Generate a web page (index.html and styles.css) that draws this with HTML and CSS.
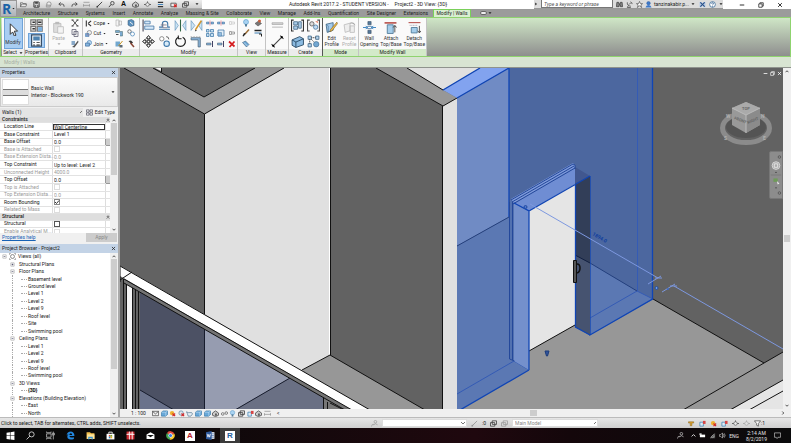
FILE: index.html
```html
<!DOCTYPE html>
<html lang="en">
<head>
<meta charset="utf-8">
<title>Autodesk Revit 2017.2</title>
<link rel="stylesheet" href="styles.css">
</head>
<body>
<svg class="sprite" aria-hidden="true">
  <defs>
  <symbol id="open" viewBox="0 0 16 16"><path d="M1 13V4h5l1 2h6v2M1 13l3-6h12l-3 6z" fill="#e8e8e8" stroke="#555" stroke-width="1.5"/></symbol>
  <symbol id="save" viewBox="0 0 16 16"><path d="M2 2h11l1 1v11H2z" fill="#ccc" stroke="#333" stroke-width="2"/><path d="M5 2h6v4H5zM4 9h8v5H4z" fill="#444"/><path d="M6 10h4v3H6z" fill="#fff"/></symbol>
  <symbol id="sync" viewBox="0 0 16 16"><circle cx="9" cy="7" r="5" fill="#eee" stroke="#777" stroke-width="1.5"/><path d="M3 9h9v5H3z" fill="#bbb" stroke="#777"/></symbol>
  <symbol id="undo" viewBox="0 0 16 16"><path d="M6 3L2 7l4 4M2 7h8q4 0 4 6" fill="none" stroke="#444" stroke-width="2"/></symbol>
  <symbol id="redo" viewBox="0 0 16 16"><path d="M10 3l4 4-4 4M14 7H6q-4 0-4 6" fill="none" stroke="#444" stroke-width="2"/></symbol>
  <symbol id="dim" viewBox="0 0 16 16"><path d="M1 3h14M1 10h14M1 7v6M15 7v6" stroke="#888" stroke-width="1.5"/></symbol>
  <symbol id="line" viewBox="0 0 16 16"><path d="M2 14L14 2" stroke="#333" stroke-width="2"/><circle cx="3" cy="13" r="2" fill="#333"/></symbol>
  <symbol id="tag" viewBox="0 0 16 16"><path d="M2 14L8 7" stroke="#333" stroke-width="2"/><circle cx="10" cy="5" r="4" fill="#ddd" stroke="#444" stroke-width="2"/></symbol>
  <symbol id="house" viewBox="0 0 16 16"><path d="M1 7l7-5 7 5v5l-7 3-7-3z" fill="#ccc" stroke="#555" stroke-width="2"/><path d="M7 8h4v5H7z" fill="#555"/></symbol>
  <symbol id="section" viewBox="0 0 16 16"><circle cx="8" cy="8" r="4" fill="#eee" stroke="#555" stroke-width="1.5"/><path d="M0 8h4m8 0h4M8 1v3" stroke="#555" stroke-width="2"/></symbol>
  <symbol id="thin" viewBox="0 0 16 16"><path d="M2 3h12M2 13h12" stroke="#333" stroke-width="3"/><path d="M2 8h12" stroke="#2e79ba" stroke-width="2"/></symbol>
  <symbol id="close-win" viewBox="0 0 16 16"><path d="M2 5h12v8H2z" fill="#eee" stroke="#555" stroke-width="2"/><path d="M9 8l6 6m0-6l-6 6" stroke="#d22" stroke-width="2.5"/></symbol>
  <symbol id="switch" viewBox="0 0 16 16"><path d="M5 2h10v8H5zM1 6h10v8H1z" fill="#eee" stroke="#444" stroke-width="2"/></symbol>
  <symbol id="pointer" viewBox="0 0 16 16"><path d="M4 1l9 9H9l2 5-2 1-2-5-3 3z" fill="#fff" stroke="#333" stroke-width="1.2"/></symbol>
  <symbol id="types" viewBox="0 0 16 16"><path d="M1 1h6v6H1zM9 1h6v6H9zM1 9h6v6H1zM9 9h6v6H9z" fill="#eee" stroke="#777" stroke-width="1.5"/><path d="M3 4h3M10 4h4M3 12h3" stroke="#333" stroke-width="2"/><path d="M10 10h5v5h-5z" fill="#79aede"/></symbol>
  <symbol id="props" viewBox="0 0 16 16"><path d="M2 1h12v14H2z" fill="#fff" stroke="#344c66" stroke-width="1.5"/><path d="M4 3h8v5H4z" fill="#4e82af"/><path d="M4 10h2v1H4zm4 0h4v1H8zm-4 3h2v1H4zm4 0h4v1H8z" fill="#222"/></symbol>
  <symbol id="paste" viewBox="0 0 16 16"><path d="M2 3h9v11H2z" fill="#ddd" stroke="#bbb"/><path d="M4 1h5v3H4z" fill="#bbb"/><path d="M7 7h7v8H7z" fill="#f4f4f4" stroke="#bbb"/></symbol>
  <symbol id="cutx" viewBox="0 0 16 16"><path d="M3 2l10 12M13 2L3 14" stroke="#555" stroke-width="2"/><path d="M1 2h4m6 0h4M1 14h4m6 0h4" stroke="#333" stroke-width="2"/></symbol>
  <symbol id="copy" viewBox="0 0 16 16"><path d="M2 1h8v10H2zM6 5h8v10H6z" fill="#f3f3f3" stroke="#667" stroke-width="1.6"/></symbol>
  <symbol id="brush" viewBox="0 0 16 16"><path d="M1 2h7v8H1z" fill="#89a9c8"/><path d="M14 1L6 11l-4 3 5 1 8-11z" fill="#555"/></symbol>
  <symbol id="cope" viewBox="0 0 16 16"><path d="M3 1v14M7 8l7-6M7 8l7 6" fill="none" stroke="#333" stroke-width="2.5"/></symbol>
  <symbol id="cut" viewBox="0 0 16 16"><circle cx="10" cy="6" r="5" fill="#eee" stroke="#777" stroke-width="1.5"/><path d="M1 8h8v7H1z" fill="#6fa5d6" stroke="#36679a"/><path d="M4 9l4 4" stroke="#e44"/></symbol>
  <symbol id="join" viewBox="0 0 16 16"><circle cx="10" cy="6" r="5" fill="#bcd8ef" stroke="#4580b5" stroke-width="1.5"/><path d="M1 7h9v7H1z" fill="#89b7df" stroke="#36679a" stroke-width="1.5"/></symbol>
  <symbol id="split" viewBox="0 0 16 16"><path d="M2 2h6v12H2zM8 4h5v8H8z" fill="#f5f5f5" stroke="#999"/></symbol>
  <symbol id="paint" viewBox="0 0 16 16"><path d="M2 3l7-2 5 3v9l-7 2-5-3z" fill="#5b91be" stroke="#35536d"/><path d="M6 6l6 5" stroke="#eee" stroke-width="2"/></symbol>
  <symbol id="beam" viewBox="0 0 16 16"><path d="M1 3h8v4H1zM10 5h5v9h-5" fill="#7aa9d0" stroke="#466"/><path d="M2 10h5v2H2z" fill="#444"/></symbol>
  <symbol id="circles" viewBox="0 0 16 16"><circle cx="5" cy="5" r="3.5" fill="none" stroke="#555" stroke-width="1.5"/><circle cx="11" cy="10" r="4" fill="#fff" stroke="#4b87b9" stroke-width="1.5"/></symbol>
  <symbol id="facesplit" viewBox="0 0 16 16"><path d="M1 3h9v10H1z" fill="#73a8cf"/><path d="M15 2L7 12" stroke="#c59426" stroke-width="2"/><path d="M9 10h6v5H9z" fill="#5d6b75"/></symbol>
  <symbol id="hammer" viewBox="0 0 16 16"><path d="M3 2l5-1 4 4-3 3z" fill="#333"/><path d="M7 6l7 8" stroke="#843" stroke-width="3"/></symbol>
  <symbol id="align" viewBox="0 0 24 24"><path d="M2 1v22" stroke="#445" stroke-width="2"/><path d="M5 4h10v5H5zM5 13h17v6H5z" fill="#d7eafa" stroke="#4778a5" stroke-width="1.5"/></symbol>
  <symbol id="offset" viewBox="0 0 24 24"><path d="M2 19h20M2 15h6V9q0-5 5-5t5 5v6h4" fill="none" stroke="#3e76a8" stroke-width="2"/><path d="M5 11h11M9 8v8h8" fill="none" stroke="#778" stroke-width="1.5"/></symbol>
  <symbol id="mirror" viewBox="0 0 24 24"><path d="M2 3l6 9-6 9zM22 3l-6 9 6 9z" fill="#cce4f5" stroke="#477fac"/><path d="M12 1v22" stroke="#364" stroke-width="2"/></symbol>
  <symbol id="mirror2" viewBox="0 0 24 24"><path d="M2 3l7 9-7 9zM22 3l-6 9 6 9z" fill="#cce4f5" stroke="#477fac"/><path d="M21 3L10 20" stroke="#d5972c" stroke-width="3"/><path d="M10 20l-1 3 4-2" fill="#333"/></symbol>
  <symbol id="move" viewBox="0 0 24 24"><path d="M12 1l4 5h-3v5h5V8l5 4-5 4v-3h-5v5h3l-4 5-4-5h3v-5H6v3l-5-4 5-4v3h5V6H8z" fill="#fff" stroke="#222" stroke-width="1.8"/></symbol>
  <symbol id="copy2" viewBox="0 0 24 24"><circle cx="7" cy="7" r="4" fill="#fff" stroke="#777" stroke-width="1.5"/><circle cx="16" cy="16" r="5" fill="#d9ebf8" stroke="#3e78aa" stroke-width="2"/><path d="M15 3q5 0 5 5" fill="none" stroke="#444" stroke-width="1.5"/></symbol>
  <symbol id="rotate" viewBox="0 0 24 24"><path d="M8 4A9 9 0 1 0 16 4" fill="none" stroke="#222" stroke-width="2.2"/><path d="M8 1v6h6" fill="none" stroke="#222" stroke-width="2"/></symbol>
  <symbol id="trim" viewBox="0 0 24 24"><path d="M2 5h17v17h-4V9H2z" fill="#8db8dd" stroke="#4d6479" stroke-width="1.4"/><path d="M1 3h20" stroke="#999" stroke-dasharray="3 2"/></symbol>
  <symbol id="splitel" viewBox="0 0 16 16"><path d="M1 6h5v4H1zM10 6h5v4h-5z" fill="#85b2d9" stroke="#396b98"/><path d="M8 3v10" stroke="#c34"/></symbol>
  <symbol id="array" viewBox="0 0 16 16"><path d="M1 1h5v5H1zM9 1h6v5H9zM1 9h5v6H1zM9 9h6v6H9z" fill="#c6dff2" stroke="#3f78a8" stroke-width="1.5"/></symbol>
  <symbol id="scale" viewBox="0 0 16 16"><path d="M2 2h12v12H2z" fill="#e1eef8" stroke="#4077a5" stroke-width="1.5"/><path d="M2 7h7v7H2z" fill="#92bcdf" stroke="#4077a5"/></symbol>
  <symbol id="extend" viewBox="0 0 16 16"><path d="M1 6h9v4H1z" fill="#85b2d9" stroke="#456"/><path d="M13 2v12" stroke="#446" stroke-width="2"/></symbol>
  <symbol id="pin" viewBox="0 0 16 16"><path d="M3 5h4v6H3zM8 6h5v4H8" fill="#eee" stroke="#888" stroke-width="1.5"/></symbol>
  <symbol id="delete" viewBox="0 0 16 16"><path d="M2 3l11 10M13 3L3 14" stroke="#d51d20" stroke-width="3.5"/></symbol>
  <symbol id="bulb" viewBox="0 0 16 16"><circle cx="8" cy="6" r="5" fill="#a9d3f2" stroke="#438dc1"/><path d="M6 10h4v5H6z" fill="#577f9c"/></symbol>
  <symbol id="override" viewBox="0 0 16 16"><path d="M2 9l7-5 6 5-7 5z" fill="#777" stroke="#444"/><circle cx="11" cy="4" r="3" fill="#c95e3b"/></symbol>
  <symbol id="paintbrush" viewBox="0 0 16 16"><path d="M14 1L6 10" stroke="#9a6b32" stroke-width="3"/><path d="M8 9l-5 6-2-1 3-6z" fill="#222"/></symbol>
  <symbol id="linework" viewBox="0 0 16 16"><path d="M1 3h14" stroke="#222" stroke-width="3"/><path d="M1 8h14" stroke="#3b7cb2" stroke-width="2"/><path d="M10 10h5v5" fill="none" stroke="#222" stroke-width="2"/></symbol>
  <symbol id="hidebox" viewBox="0 0 16 16"><path d="M1 5l6-3 7 7-5 5z" fill="#6ba6d5" stroke="#31536e"/><path d="M4 5l7 7" stroke="#fff"/></symbol>
  <symbol id="ruler" viewBox="0 0 24 16"><path d="M2 3h20v3H2zM2 11h20" fill="#ddd" stroke="#aaa" stroke-width="1.5"/></symbol>
  <symbol id="measure" viewBox="0 0 24 24"><path d="M4 20L20 4M1 17l6 6M17 1l6 6" stroke="#444" stroke-width="2"/><circle cx="4" cy="20" r="2"/><circle cx="20" cy="4" r="2"/></symbol>
  <symbol id="group" viewBox="0 0 24 24"><path d="M5 2H1v20h4M19 2h4v20h-4" fill="none" stroke="#333" stroke-width="2"/><path d="M5 5h7v6H5zM14 5h5v12h-5zM5 13h7v6H5z" fill="#a9cce9" stroke="#4a6c89" stroke-width="1.5"/></symbol>
  <symbol id="similar" viewBox="0 0 24 24"><path d="M5 2H1v20h4M19 2h4v20h-4" fill="none" stroke="#555" stroke-width="2"/><circle cx="9" cy="9" r="4" fill="#ddd" stroke="#555" stroke-width="1.5"/><circle cx="16" cy="15" r="4" fill="#c4dcf0" stroke="#487aa5" stroke-width="1.5"/><path d="M15 4h5v4" fill="#e9795d"/></symbol>
  <symbol id="parts" viewBox="0 0 24 24"><path d="M2 9l14-6 7 4v11L9 23l-7-4z" fill="#8bbae0" stroke="#24445f" stroke-width="1.6"/><path d="M2 9l7 4v10m0-10l14-6" fill="none" stroke="#24445f" stroke-width="1.6"/></symbol>
  <symbol id="assembly" viewBox="0 0 24 24"><path d="M2 2h6v6H2zM16 2h6v6h-6zM2 16h6v6H2z" fill="#b9d8ef" stroke="#476c8b" stroke-width="1.6"/><circle cx="17" cy="17" r="5" fill="#73a7d2" stroke="#325f83"/><path d="M8 5h8M5 8v8M8 8l5 5" stroke="#333" stroke-width="1.5" stroke-dasharray="2 1"/></symbol>
  <symbol id="editp" viewBox="0 0 24 24"><path d="M2 6l13-3v14L4 21z" fill="#a3caec" stroke="#3d6584" stroke-width="1.5"/><path d="M2 6l4 3v12" fill="none" stroke="#3d6584"/><path d="M22 2L10 16l-1 4 4-2L23 5z" fill="#efba46" stroke="#735921"/></symbol>
  <symbol id="resetp" viewBox="0 0 24 24"><path d="M2 7l11-3v14L4 21zM13 9h8v12h-8z" fill="#eee" stroke="#bbb" stroke-width="1.5"/><path d="M13 4q7-2 9 4" fill="none" stroke="#aaa" stroke-width="2"/></symbol>
  <symbol id="opening" viewBox="0 0 24 24"><path d="M9 1h6v6H9zM9 17h6v6H9z" fill="#54799b" stroke="#34475b"/><path d="M8 10h8v4H8z" fill="#fff" stroke="#4e7fac" stroke-width="1.5"/><path d="M0 12h7m10 0h7M5 9l3 3-3 3M19 9l-3 3 3 3" fill="none" stroke="#357fbe" stroke-width="1.7"/></symbol>
  <symbol id="attach" viewBox="0 0 24 24"><path d="M1 2h22v3H1z" fill="#b7524c"/><path d="M6 7h11v16H6z" fill="#a5cdea" stroke="#487493" stroke-width="1.5"/><path d="M20 21V9m-3 3l3-4 3 4" fill="none" stroke="#333" stroke-width="1.5"/></symbol>
  <symbol id="detach" viewBox="0 0 24 24"><path d="M1 2h22v2H1z" fill="#b7524c"/><path d="M6 12h11v10H6z" fill="#a5cdea" stroke="#487493" stroke-width="1.5"/><path d="M3 8h15" stroke="#778" stroke-dasharray="2 1"/><path d="M21 9v12m-3-3l3 4 3-4" fill="none" stroke="#333" stroke-width="1.5"/></symbol>
  <symbol id="binoc" viewBox="0 0 16 16"><path d="M2 3h4l1 4h2l1-4h4l1 10h-5V9H7v4H1z" fill="#888" stroke="#333" stroke-width="1.5"/></symbol>
  <symbol id="dish" viewBox="0 0 16 16"><path d="M3 3q-1 8 8 9M5 11l-2 4h8M10 2q4 1 4 5M7 8l4-4" fill="none" stroke="#555" stroke-width="2"/></symbol>
  <symbol id="star" viewBox="0 0 16 16"><path d="M8 1l2 5h5l-4 3 2 6-5-4-5 4 2-6-4-3h5z" fill="#fff" stroke="#444" stroke-width="1.4"/></symbol>
  <symbol id="user" viewBox="0 0 16 16"><circle cx="8" cy="5" r="4" fill="#3e79ca" stroke="#25549d"/><path d="M1 15q1-6 7-6t7 6z" fill="#3e79ca"/></symbol>
  <symbol id="exchange" viewBox="0 0 16 16"><path d="M1 2h6v12H1zM9 2h6v12H9z" fill="#b9cbe4"/><path d="M3 3l10 10M13 3L3 13" stroke="#274f87" stroke-width="2.5"/></symbol>
  <symbol id="help" viewBox="0 0 16 16"><circle cx="8" cy="8" r="6.5" fill="#fff" stroke="#376895" stroke-width="1.8"/><path d="M6 6q0-2 2-2t2 2-2 3m0 2v2" fill="none" stroke="#245386" stroke-width="1.8"/></symbol>
  <symbol id="min" viewBox="0 0 16 16"><path d="M2 8h12" stroke="currentColor" stroke-width="2.5"/></symbol>
  <symbol id="restore" viewBox="0 0 16 16"><path d="M2 5h9v9H2zM5 5V2h9v9h-3" fill="none" stroke="currentColor" stroke-width="2"/></symbol>
  <symbol id="x" viewBox="0 0 16 16"><path d="M3 3l10 10M13 3L3 13" stroke="currentColor" stroke-width="2.4"/></symbol>
  <symbol id="down" viewBox="0 0 16 16"><path d="M2 5l6 6 6-6" fill="none" stroke="currentColor" stroke-width="3"/></symbol>
  <symbol id="up" viewBox="0 0 16 16"><path d="M2 11l6-6 6 6" fill="none" stroke="currentColor" stroke-width="3"/></symbol>
  <symbol id="fold" viewBox="0 0 16 16"><path d="M3 8l5-5 5 5M3 14l5-5 5 5" fill="none" stroke="#222" stroke-width="2.5"/></symbol>
  <symbol id="tri" viewBox="0 0 16 16"><path d="M2 5h12l-6 7z" fill="currentColor"/></symbol>
  <symbol id="edittype" viewBox="0 0 16 16"><path d="M1 2h6v5H1zM9 2h6v5H9zM1 9h6v5H1zM9 9h6v5H9z" fill="#fff" stroke="#445" stroke-width="1.5"/></symbol>
  <symbol id="minus" viewBox="0 0 9 9"><path d="M1.5 1.5h6v6h-6z" fill="#fff" stroke="#999"/><path d="M3 4.5h3" stroke="#335"/></symbol>
  <symbol id="plus" viewBox="0 0 9 9"><path d="M1.5 1.5h6v6h-6z" fill="#fff" stroke="#999"/><path d="M3 4.5h3M4.500 3v3" stroke="#335"/></symbol>
  <symbol id="views" viewBox="0 0 16 16"><circle cx="8" cy="8" r="4.500" fill="none" stroke="#555" stroke-width="1.5"/><path d="M4 1H1v3M12 1h3v3M4 15H1v-3M12 15h3v-3" fill="none" stroke="#777" stroke-width="1.5"/></symbol>
  <symbol id="detail" viewBox="0 0 16 16"><path d="M1 3h14v10H1zM1 3l7 6 7-6" fill="#eee" stroke="#444" stroke-width="1.6"/></symbol>
  <symbol id="cube" viewBox="0 0 16 16"><path d="M1 5l4-3h10v8l-4 4H1z" fill="#69a9d9" stroke="#286c9b" stroke-width="1.3"/><path d="M1 5h10v9m0-9l4-3" fill="none" stroke="#eaf6ff"/></symbol>
  <symbol id="sun" viewBox="0 0 16 16"><circle cx="7" cy="7" r="5" fill="#efb22f"/><path d="M8 8l6 6m0-6l-6 6" stroke="#d02626" stroke-width="2.5"/></symbol>
  <symbol id="shadow" viewBox="0 0 16 16"><circle cx="7" cy="7" r="5" fill="#dce5ed" stroke="#5580a0" stroke-width="1.5"/><path d="M8 8l6 6m0-6l-6 6" stroke="#d02626" stroke-width="2.5"/></symbol>
  <symbol id="teapot" viewBox="0 0 16 16"><path d="M1 4l4 2h8l2 3-4 5H5L3 8z" fill="#e7eff5" stroke="#49728f" stroke-width="1.5"/></symbol>
  <symbol id="glasses" viewBox="0 0 16 16"><circle cx="4" cy="9" r="3" fill="none" stroke="#555" stroke-width="1.6"/><circle cx="12" cy="7" r="3" fill="none" stroke="#555" stroke-width="1.6"/></symbol>
  <symbol id="filter" viewBox="0 0 16 16"><path d="M1 2h14l-5 6v6l-4-2V8z" fill="#fff" stroke="#444" stroke-width="1.6"/></symbol>
  <symbol id="link" viewBox="0 0 16 16"><path d="M1 4h12v3H9v6H5V7H1z" fill="#dca02b" stroke="#80611d"/></symbol>
  <symbol id="selpin" viewBox="0 0 16 16"><path d="M2 5h8v9H2z" fill="#dceaf5" stroke="#377db0" stroke-width="1.6"/><path d="M9 2h6v7H9z" fill="#d74444"/></symbol>
  <symbol id="win" viewBox="0 0 16 16"><path d="M1 3l6-1v6H1zm7-1l7-1v7H8zM1 9h6v6l-6-1zm7 0h7v7l-7-1z" fill="#fff"/></symbol>
  <symbol id="search" viewBox="0 0 16 16"><circle cx="10" cy="6" r="4.500" fill="none" stroke="#ddd" stroke-width="1.500"/><path d="M7 9l-6 6" stroke="#ddd" stroke-width="1.500"/></symbol>
  <symbol id="task" viewBox="0 0 16 16"><path d="M1 5h8v6H1zM1 1v2h8V1M1 15v-2h8v2M13 1v14M11 4h4v3h-4z" fill="none" stroke="#bbb" stroke-width="1.4"/></symbol>
  <symbol id="edge" viewBox="0 0 16 16"><path d="M1 8Q2 1 9 1q6 1 6 8H6q1 4 8 2v3q-7 3-11-1-2-5 2-8-3 1-4 3M6 7h5q0-3-2.500-3T6 7" fill="#2388e0"/></symbol>
  <symbol id="folder" viewBox="0 0 16 16"><path d="M1 2h6l2 2h6v10H1z" fill="#f4c04d"/><path d="M2 6h13v8H2z" fill="#ffe59b"/><path d="M4 10h8v5h-2v-2H6v2H4z" fill="#3c96d5"/></symbol>
  <symbol id="store" viewBox="0 0 16 16"><path d="M1 5h14v10H1z" fill="#fff"/><path d="M5 5V2h6v3" fill="none" stroke="#fff" stroke-width="1.500"/><path d="M5 7h3v3H5z" fill="#e44a28"/><path d="M8 7h3v3H8z" fill="#6ca72d"/><path d="M5 10h3v3H5z" fill="#2584c7"/><path d="M8 10h3v3H8z" fill="#f3b21f"/></symbol>
  <symbol id="gift" viewBox="0 0 16 16"><path d="M1 1h14v14H1z" fill="#cc2a30"/><path d="M6 1v14M11 1v14M1 6h14" stroke="#fff" stroke-width="1.600"/><path d="M3 4h10" stroke="#f5c7c9"/></symbol>
  <symbol id="mail" viewBox="0 0 16 16"><path d="M1 6l7-4 7 4v8H1z" fill="#fff"/><path d="M2 7l6 4 6-4H2" fill="#111"/></symbol>
  <symbol id="chrome" viewBox="0 0 16 16"><path d="M8 8L1.500 4A7.500 7.500 0 0 1 15 5z" fill="#e34a3c"/><path d="M8 8L1.500 4A7.500 7.500 0 0 0 7 15.500z" fill="#44a853"/><path d="M8 8L7 15.500A7.500 7.500 0 0 0 15 5z" fill="#f9c82d"/><circle cx="8" cy="8" r="3.800" fill="#fff"/><circle cx="8" cy="8" r="2.800" fill="#397be8"/></symbol>
  <symbol id="wordic" viewBox="0 0 16 16"><path d="M8 2h7v12H8z" fill="#e7eef9"/><path d="M9 5h5M9 8h5M9 11h5" stroke="#2b579a"/><path d="M0 2l10-2v16L0 14z" fill="#2b579a"/><path d="M2 5l1.500 6L5 6l1.500 5L8 5" fill="none" stroke="#fff" stroke-width="1.300"/></symbol>
  <symbol id="people" viewBox="0 0 16 16"><circle cx="10" cy="4" r="3" fill="none" stroke="currentColor" stroke-width="1.400"/><path d="M6 11q4-5 9 0M1 15q1-7 6-5" fill="none" stroke="currentColor" stroke-width="1.400"/></symbol>
  <symbol id="battery" viewBox="0 0 16 16"><path d="M2 6h12v6H2z" fill="#fff"/><path d="M1 3h5v4H1z" fill="#ddd"/></symbol>
  <symbol id="wifi" viewBox="0 0 16 16"><path d="M2 14L14 2v12z" fill="#555"/><path d="M4 14q1-5 8-9M8 14q1-3 5-5" fill="none" stroke="#ddd" stroke-width="1.300"/></symbol>
  <symbol id="sound" viewBox="0 0 16 16"><path d="M1 6h3l4-4v12l-4-4H1zM10 5q2 3 0 6M12 3q4 5 0 10" fill="none" stroke="#ddd" stroke-width="1.300"/></symbol>
  <symbol id="note" viewBox="0 0 16 16"><path d="M1 2h14v10H9l-2 3-2-3H1z" fill="none" stroke="#ddd" stroke-width="1.400"/></symbol>
  </defs>
</svg>

<header class="top">
  <button class="app" aria-label="Application menu"><span>R</span><svg><use href="#tri"/></svg></button>
  <div class="top-rows">
    <div class="titlebar">
      <div class="qat">
        <button aria-label="Open"><svg><use href="#open"/></svg></button>
        <button aria-label="Save"><svg><use href="#save"/></svg></button>
        <button aria-label="Sync"><svg><use href="#sync"/></svg></button>
        <button aria-label="Undo"><svg><use href="#undo"/></svg></button>
        <button aria-label="Redo"><svg><use href="#redo"/></svg></button>
        <button aria-label="Measure"><svg><use href="#dim"/></svg></button>
        <button aria-label="Dimension"><svg><use href="#line"/></svg></button>
        <button aria-label="Tag"><svg><use href="#tag"/></svg></button>
        <button class="qat-a">A</button>
        <button aria-label="3D view"><svg><use href="#house"/></svg></button>
        <button aria-label="Section"><svg><use href="#section"/></svg></button>
        <button aria-label="Thin lines"><svg><use href="#thin"/></svg></button>
        <button aria-label="Close hidden"><svg><use href="#close-win"/></svg></button>
        <button aria-label="Switch windows"><svg><use href="#switch"/></svg></button>
        <button aria-label="Customize"><svg class="tiny"><use href="#tri"/></svg></button>
      </div>
      <div class="title"><span>Autodesk Revit 2017.2 - STUDENT VERSION -</span><span>Project2 - 3D View: {3D}</span></div>
      <div class="infocenter">
        <svg class="tiny play"><use href="#tri"/></svg>
        <input type="text" aria-label="Search" placeholder="Type a keyword or phrase">
        <button aria-label="Find"><svg><use href="#binoc"/></svg></button>
        <button aria-label="Subscription"><svg><use href="#dish"/></svg></button>
        <button aria-label="Favorites"><svg><use href="#star"/></svg></button>
        <button class="account"><svg><use href="#user"/></svg>tanzinakabir.p...<svg class="tiny"><use href="#tri"/></svg></button>
        <button aria-label="Exchange"><svg><use href="#exchange"/></svg></button>
        <button aria-label="Help"><svg><use href="#help"/></svg></button>
        <svg class="tiny"><use href="#tri"/></svg>
      </div>
      <div class="winbtns">
        <button aria-label="Minimize"><svg><use href="#min"/></svg></button>
        <button aria-label="Restore"><svg><use href="#restore"/></svg></button>
        <button aria-label="Close"><svg><use href="#x"/></svg></button>
      </div>
    </div>
    <nav class="tabs">
      <div class="tablist">
        <a href="#">Architecture</a><a href="#">Structure</a><a href="#">Systems</a><a href="#">Insert</a><a href="#">Annotate</a><a href="#">Analyze</a><a href="#">Massing &amp; Site</a><a href="#">Collaborate</a><a href="#">View</a><a href="#">Manage</a><a href="#">Add-Ins</a><a href="#">Quantification</a><a href="#">Site Designer</a><a href="#">Extensions</a>
      </div>
      <a class="active" href="#">Modify | Walls</a>
      <button class="pill" aria-label="Ribbon display"><i></i><svg class="tiny"><use href="#tri"/></svg></button>
    </nav>
  </div>
</header>

<section class="ribbon">
  <div class="panel p-select"><div class="tools"><button class="big on"><svg class="large"><use href="#pointer"/></svg>Modify</button></div><h2>Select <svg class="tiny"><use href="#tri"/></svg></h2></div>
  <div class="panel p-props"><div class="tools stack"><button aria-label="Type properties"><svg class="large"><use href="#types"/></svg></button><button class="on" aria-label="Properties"><svg class="large"><use href="#props"/></svg></button></div><h2>Properties</h2></div>
  <div class="panel p-clip"><div class="tools"><button class="big off"><svg class="large"><use href="#paste"/></svg>Paste<svg class="tiny"><use href="#tri"/></svg></button>
    <div class="icons one"><svg><use href="#cutx"/></svg><svg><use href="#copy"/></svg><svg><use href="#brush"/></svg></div></div><h2>Clipboard</h2></div>
  <div class="panel p-geo"><div class="tools">
    <div class="list"><button><svg><use href="#cope"/></svg>Cope<svg class="tiny"><use href="#tri"/></svg></button><button><svg><use href="#cut"/></svg>Cut<svg class="tiny"><use href="#tri"/></svg></button><button><svg><use href="#join"/></svg>Join<svg class="tiny"><use href="#tri"/></svg></button></div>
    <div class="icons two"><svg><use href="#split"/></svg><svg><use href="#paint"/></svg><svg><use href="#beam"/></svg><svg><use href="#circles"/></svg><svg><use href="#facesplit"/></svg><svg><use href="#hammer"/></svg></div></div><h2>Geometry</h2></div>
  <div class="panel p-mod"><div class="tools">
    <div class="icons four"><svg><use href="#align"/></svg><svg><use href="#offset"/></svg><svg><use href="#mirror"/></svg><svg><use href="#mirror2"/></svg><svg><use href="#move"/></svg><svg><use href="#copy2"/></svg><svg><use href="#rotate"/></svg><svg><use href="#trim"/></svg></div>
    <div class="icons three"><svg><use href="#splitel"/></svg><svg><use href="#splitel"/></svg><svg class="dim"><use href="#pin"/></svg><svg><use href="#array"/></svg><svg><use href="#scale"/></svg><svg><use href="#pin"/></svg><svg><use href="#extend"/></svg><svg><use href="#extend"/></svg><svg><use href="#delete"/></svg></div></div><h2>Modify</h2></div>
  <div class="panel p-view"><div class="tools"><div class="icons two"><svg><use href="#bulb"/></svg><svg><use href="#override"/></svg><svg><use href="#paintbrush"/></svg><svg><use href="#linework"/></svg><svg><use href="#hidebox"/></svg></div></div><h2>View</h2></div>
  <div class="panel p-meas"><div class="tools stack"><svg class="large"><use href="#ruler"/></svg><svg class="large"><use href="#measure"/></svg></div><h2>Measure</h2></div>
  <div class="panel p-create"><div class="tools"><div class="icons four pair"><svg><use href="#group"/></svg><svg><use href="#similar"/></svg><svg><use href="#parts"/></svg><svg><use href="#assembly"/></svg></div></div><h2>Create</h2></div>
  <div class="panel p-mode green"><div class="tools"><button class="big"><svg class="large"><use href="#editp"/></svg>Edit<br>Profile</button><button class="big off"><svg class="large"><use href="#resetp"/></svg>Reset<br>Profile</button></div><h2>Mode</h2></div>
  <div class="panel p-wall green"><div class="tools"><button class="big"><svg class="large"><use href="#opening"/></svg>Wall<br>Opening</button><button class="big"><svg class="large"><use href="#attach"/></svg>Attach<br>Top/Base</button><button class="big"><svg class="large"><use href="#detach"/></svg>Detach<br>Top/Base</button></div><h2>Modify Wall</h2></div>
</section>
<div class="options">Modify | Walls</div>

<main class="work">
  <aside class="side">
    <section class="props">
      <header class="pal"><h3>Properties</h3><button aria-label="Close properties"><svg><use href="#x"/></svg></button></header>
      <button class="type"><span class="thumb"><i></i></span><span>Basic Wall<br>Interior - Blockwork 190</span><svg class="tiny"><use href="#tri"/></svg></button>
      <div class="instance"><select aria-label="Instance"><option>Walls (1)</option></select><button><svg><use href="#edittype"/></svg>Edit Type</button></div>
      <div class="gridwrap">
        <div class="clip"><table>
          <tbody>
          <tr class="group"><th colspan="2">Constraints</th><td><svg><use href="#fold"/></svg></td></tr>
          <tr><th><label for="f1">Location Line</label></th><td><input id="f1" class="focus" value="Wall Centerline"></td><td></td></tr>
          <tr><th><label for="f2">Base Constraint</label></th><td><input id="f2" value="Level 1"></td><td></td></tr>
          <tr><th><label for="f3">Base Offset</label></th><td><input id="f3" value="0.0"></td><td class="knob"></td></tr>
          <tr class="ro"><th><label for="f4">Base is Attached</label></th><td><input id="f4" type="checkbox" disabled></td><td></td></tr>
          <tr class="ro"><th><label for="f5">Base Extension Dista...</label></th><td><input id="f5" value="0.0" disabled></td><td></td></tr>
          <tr><th><label for="f6">Top Constraint</label></th><td><input id="f6" value="Up to level: Level 2"></td><td></td></tr>
          <tr class="ro"><th><label for="f7">Unconnected Height</label></th><td><input id="f7" value="4000.0" disabled></td><td></td></tr>
          <tr><th><label for="f8">Top Offset</label></th><td><input id="f8" value="0.0"></td><td class="knob"></td></tr>
          <tr class="ro"><th><label for="f9">Top is Attached</label></th><td><input id="f9" type="checkbox" disabled></td><td></td></tr>
          <tr class="ro"><th><label for="f10">Top Extension Dista...</label></th><td><input id="f10" value="0.0" disabled></td><td></td></tr>
          <tr><th><label for="f11">Room Bounding</label></th><td><span class="tick"><input id="f11" type="checkbox" checked><svg viewBox="0 0 6 6"><path d="M1 3l1.500 1.500L5 1.500" fill="none" stroke="#333"/></svg></span></td><td></td></tr>
          <tr class="ro"><th><label for="f12">Related to Mass</label></th><td><input id="f12" type="checkbox" disabled></td><td></td></tr>
          <tr class="group"><th colspan="2">Structural</th><td><svg><use href="#fold"/></svg></td></tr>
          <tr><th><label for="f13">Structural</label></th><td><input id="f13" type="checkbox"></td><td></td></tr>
          <tr class="ro"><th><label for="f14">Enable Analytical M...</label></th><td><input id="f14" type="checkbox" disabled></td><td></td></tr>
          </tbody>
        </table></div>
        <div class="scroll"><svg><use href="#up"/></svg><i class="thumb-a"></i><svg><use href="#down"/></svg></div>
      </div>
      <footer class="apply"><a href="#">Properties help</a><button disabled>Apply</button></footer>
    </section>
    <section class="browser">
      <header class="pal"><h3>Project Browser - Project2</h3><button aria-label="Close browser"><svg><use href="#x"/></svg></button></header>
      <div class="gridwrap">
        <ul class="tree">
          <li class="l0"><svg><use href="#minus"/></svg><svg><use href="#views"/></svg>Views (all)</li>
          <li class="l1"><svg><use href="#plus"/></svg>Structural Plans</li>
          <li class="l1"><svg><use href="#minus"/></svg>Floor Plans</li>
          <li class="l2">Basement level</li><li class="l2">Ground level</li><li class="l2">Level 1</li><li class="l2">Level 2</li><li class="l2">Level 9</li><li class="l2">Roof level</li><li class="l2">Site</li><li class="l2">Swimming pool</li>
          <li class="l1"><svg><use href="#minus"/></svg>Ceiling Plans</li>
          <li class="l2">Level 1</li><li class="l2">Level 2</li><li class="l2">Level 9</li><li class="l2">Roof level</li><li class="l2">Swimming pool</li>
          <li class="l1"><svg><use href="#minus"/></svg>3D Views</li>
          <li class="l2"><b>{3D}</b></li>
          <li class="l1"><svg><use href="#minus"/></svg>Elevations (Building Elevation)</li>
          <li class="l2">East</li><li class="l2">North</li>
        </ul>
        <div class="scroll"><svg><use href="#up"/></svg><i class="thumb-b"></i><svg><use href="#down"/></svg></div>
      </div>
    </section>
  </aside>

  <section class="view">
    <div class="canvas">
      <svg class="scene" viewBox="120 68 663 341" preserveAspectRatio="xMidYMid slice" role="img" aria-label="3D model view">
        <rect x="120" y="68" width="663" height="342" fill="#626262"/>
        <!-- left room -->
        <path d="M204 114L284 68h46v288l-28 16-98-58z" fill="#e0e0e0"/>
        <path d="M124 68h29l51 29 51-29h29l-80 46z" fill="#979797"/>
        <path d="M155 68h6v3z" fill="#eee"/>
        <path d="M124 68l80.500 46L284 68M153 68l51 29 51-29M161.500 68v4M204.500 114v200" class="k"/>
        <path d="M329.500 68v287" stroke="#fff"/>
        <path d="M330.500 68v287" class="k"/>
        <path d="M302 370l28-15 95 55H360z" fill="#979797"/>
        <path d="M302 370l28-15 95 55" class="k"/>
        <!-- second wall corner -->
        <path d="M407 68h73l-37 22z" fill="#e0e0e0"/>
        <path d="M376 68h31l36 22 14 8-14 8z" fill="#979797"/>
        <path d="M443 106l14-8v312h-14z" fill="#e0e0e0"/>
        <path d="M376 68l67 38 14-8M407 68l36 22M442.500 106v304" class="k"/>
        <!-- right floor -->
        <path d="M457 410l72-59 46-26 78-26 111 64 19-11v58z" fill="#979797"/>
        <path d="M783 380v30h-52z" fill="#e5e5e5"/>
        <path d="M653 299l111 64 19-11M764 363l-81 47M783 380l-53 30M783 391l-34 19" class="k"/>
        <!-- selected wall -->
        <path d="M443 90l37-22h29l-52 30z" fill="#82a3ef"/>
        <path d="M457 98l52-30v149l-52 29z" fill="#708bc4"/>
        <path d="M509 68h144v231l-63 36V200h-81z" fill="#4c679f"/>
        <path d="M457 246l52-29h20v153l-69 40h-3z" fill="#5b78b3"/>
        <path d="M590 263l47 28 16 8-63 36z" fill="#5b78b3"/>
        <path d="M637.500 68v223M457 394l57-33 15 9M590 318l47-27 16 8" class="b2"/>
        <path d="M457 246l52-29M590 263l47 28" stroke="#233f7d"/>
        <path d="M443 90l37-22M457 98l52-30v149M590 176v159l62.500-36V68M460 410l69-40" class="b1"/>
        <!-- door -->
        <path d="M510 200h4v161l-5-3z" fill="#5271b0"/>
        <path d="M514 203l15 8v159l-15-9z" fill="#7490cc"/>
        <path d="M511 199l62-36 2 2v4l-61 34z" fill="#7e9ada"/>
        <path d="M514 203l61-36v17l-46 27z" fill="#6f8dd3"/>
        <path d="M575 167l15 9-15 8z" fill="#41578f"/>
        <path d="M575 184l15-8v159l-15-8z" fill="#323e58"/>
        <path d="M575 255l15 8v72l-15-8z" fill="#465370"/>
        <path d="M575 255l15 8" stroke="#111f40"/>
        <path d="M529 211l46-27v141l-46 26z" fill="#e5e5e5"/>
        <path d="M529 351l46-26" class="k"/>
        <path d="M511 200l62-36 2 1v4M512 202l62-36M513 204l62-36M509.500 202v157l5 2M512.500 202v158" fill="none" stroke="#24489a"/>
        <path d="M514 203l15 8v159M529 211l61-35M575.500 184v143l14.500 8" class="b1"/>
        <path d="M573.500 260.500h3v22h-3z" fill="#555" stroke="#111"/>
        <path d="M577 264q3 0 3 4t-3 5" fill="none" stroke="#111" stroke-width="1.500"/>
        <!-- dimensions -->
        <path d="M530 204l128 74M674 286l109 63M648 284l13-8M655 278h7M662 292l13-8M670 286h7" stroke="#7d98df"/>
        <circle cx="525.500" cy="207" r="1.500" fill="#4b78d5" stroke="#244b9e"/>
        <circle cx="656.500" cy="288" r="1.500" fill="#6f9ae8" stroke="#24509c"/>
        <circle cx="668" cy="289" r="1" fill="#3968c5"/>
        <path d="M545 351h4l-1.500 5h-1z" fill="#31549a" stroke="#1d3c7b"/>
        <text x="592" y="235" transform="rotate(30 592 235)" class="dimtext">1894.0</text>
        <!-- balcony glass -->
        <path d="M138 290l66 38v82h-66z" fill="#4c5164"/>
        <path d="M204 328l86 50-55 32h-31z" fill="#969cb0"/>
        <path d="M290 378l33 19v13h-88z" fill="#6a7084"/>
        <path d="M140 390l34 20h-34z" fill="#6a728b"/>
        <path d="M140 390l34 20M204.500 328v82M235 410l55-32" stroke="#171c2d" fill="none"/>
        <path d="M120 277l20 12v121h-20z" fill="#626262"/>
        <path d="M127 284l5 3v123h-5z" fill="#f5f5f5"/>
        <path d="M123.500 279v131M126.500 283v127M132.500 287v123M135.500 289v121M138.500 291v119" class="k"/>
        <path d="M323 396h9l20 14h-29z" fill="#777"/>
        <path d="M323.500 396v14M327.500 402v8M330 403l16 8" class="k"/>
        <path d="M124 279l228 131h-7L124 283z" fill="#747474"/>
        <path d="M120 266l4 2 246 142h-18L120 276z" fill="#fff"/>
        <path d="M120 266l250 144M124 279l228 131M124 283l221 127M120 280l12-8M120 267v15" class="k"/>
        <!-- view cube -->
        <ellipse cx="746" cy="128" rx="23.500" ry="14.500" fill="none" stroke="#8b8b8b" stroke-width="5"/>
        <ellipse cx="746" cy="127" rx="20" ry="11" fill="#545454"/>
        <path d="M732 108l14-6 14 6v17l-14 8-14-8z" fill="#999"/>
        <path d="M732 108l14-6 14 6-14 7z" fill="#aaa"/>
        <path d="M746 115l14-7v17l-14 8z" fill="#8b8b8b"/>
        <path d="M732 108l14 7 14-7M746 115v18" fill="none" stroke="#bbb"/>
        <g class="cubetext"><text x="742" y="110">TOP</text><text x="734" y="119" transform="rotate(22 734 119)">FRONT</text><text x="748" y="124" transform="rotate(-22 748 124)">RIGHT</text></g>
        <g class="compass"><text x="724" y="140">S</text><text x="763" y="140">E</text><text x="726" y="118">W</text><text x="761" y="118">N</text></g>
      </svg>
      <div class="childbtns"><svg><use href="#min"/></svg><svg><use href="#restore"/></svg><svg><use href="#x"/></svg></div>
      <div class="navbar"><svg viewBox="0 0 14 48"><path d="M1 24h12" stroke="#777"/><circle cx="11" cy="3" r="1.500" fill="none" stroke="#555"/><circle cx="11" cy="45" r="1.500" fill="none" stroke="#555"/><circle cx="7" cy="13" r="4.500" fill="#aaa" stroke="#ddd"/><path d="M5 11h4v4H5z" fill="none" stroke="#eee"/><path d="M4 28h5v4H4z" fill="#6e9c58"/><path d="M8 31l3 3-2 1z" fill="#eee"/><path d="M6 21h2M6 39h2" stroke="#444"/></svg></div>
    </div>
    <div class="vscroll"><svg><use href="#up"/></svg><i></i><svg><use href="#down"/></svg></div>
    <div class="viewbar">
      <span>1 : 100</span>
      <div class="vicons"><svg><use href="#detail"/></svg><svg><use href="#cube"/></svg><svg><use href="#sun"/></svg><svg><use href="#shadow"/></svg><svg><use href="#teapot"/></svg><svg><use href="#cube"/></svg><svg><use href="#cube"/></svg><svg><use href="#house"/></svg><svg><use href="#glasses"/></svg><svg><use href="#bulb"/></svg><svg><use href="#switch"/></svg><svg><use href="#selpin"/></svg><svg><use href="#house"/></svg><svg><use href="#dim"/></svg></div>
      <span>&lt;</span>
      <div class="hscroll"><i></i></div><svg class="tiny right"><use href="#up"/></svg>
    </div>
  </section>
</main>

<footer class="status">
  <span class="hint">Click to select, TAB for alternates, CTRL adds, SHIFT unselects.</span>
  <svg class="faint"><use href="#people"/></svg>
  <select class="workset" aria-label="Workset"><option></option></select>
  <svg class="faint"><use href="#line"/></svg><span>:0</span>
  <svg><use href="#switch"/></svg><svg class="faint"><use href="#switch"/></svg>
  <select class="model" aria-label="Design option" disabled><option>Main Model</option></select>
  <div class="sel"><svg><use href="#link"/></svg><svg><use href="#selpin"/></svg><svg><use href="#sun"/></svg><svg><use href="#selpin"/></svg><svg><use href="#section"/></svg><svg class="faint"><use href="#section"/></svg><svg><use href="#filter"/></svg><span>:1</span></div>
</footer>
<footer class="taskbar">
  <div class="apps">
    <button aria-label="Start"><svg><use href="#win"/></svg></button>
    <button aria-label="Search"><svg><use href="#search"/></svg></button>
    <button aria-label="Task view"><svg><use href="#task"/></svg></button>
    <button aria-label="Edge"><svg><use href="#edge"/></svg></button>
    <button aria-label="Explorer"><svg><use href="#folder"/></svg></button>
    <button aria-label="Store"><svg><use href="#store"/></svg></button>
    <button aria-label="Gift"><svg><use href="#gift"/></svg></button>
    <button aria-label="Mail"><svg><use href="#mail"/></svg></button>
    <button aria-label="Chrome"><svg><use href="#chrome"/></svg></button>
    <button><b class="acad">A</b></button>
    <button aria-label="Word"><svg><use href="#wordic"/></svg></button>
    <button class="current"><b class="revit">R</b></button>
  </div>
  <div class="tray"><svg><use href="#people"/></svg><svg class="caret"><use href="#up"/></svg><svg><use href="#battery"/></svg><svg><use href="#wifi"/></svg><svg><use href="#sound"/></svg><span>ENG</span><time>2:14 AM<br>8/2/2019</time><svg><use href="#note"/></svg></div>
</footer>
</body>
</html>
```
FILE: styles.css
```css
* { box-sizing: border-box; }
html, body { height: 100%; margin: 0; }
body {
  display: flex; flex-direction: column; overflow: hidden;
  font: 5px/7px Roboto, "Liberation Sans", sans-serif; color: #222; background: #f0f0f0;
}
button, input, select { font: inherit; color: inherit; margin: 0; padding: 0; border: 0; background: none; border-radius: 0; min-width: 0; }
button { display: flex; align-items: center; justify-content: center; }
a { color: inherit; text-decoration: none; }
h2, h3, ul { margin: 0; padding: 0; font-size: inherit; font-weight: 400; list-style: none; }
svg { width: 7px; height: 7px; flex: none; display: block; }
.sprite { position: absolute; width: 0; height: 0; }
svg.tiny { width: 4px; height: 4px; }

/* title and tabs */
.top { display: flex; flex: none; height: 17px; background: #9b9b9b; }
.app { width: 17px; background: linear-gradient(#d8dbde, #aeb2b7); border: 1px solid #999; gap: 1px; }
.app span { font: bold 14px/15px "Open Sans", sans-serif; color: #1b62a7; }
.app svg { width: 3px; height: 3px; }
.top-rows { flex: 1; min-width: 0; }
.titlebar { display: flex; height: 9px; background: #fff; align-items: center; }
.qat { width: 185px; height: 9px; display: flex; align-items: center; justify-content: space-between; padding: 0 3px; background: linear-gradient(#eee, #cfcfcf); border-bottom: 1px solid #aaa; }
.qat-a { font: bold 7px/8px "Liberation Sans", sans-serif; color: #111; }
.title { flex: 1; display: flex; gap: 6px; justify-content: center; white-space: nowrap; }
.infocenter { display: flex; align-items: center; gap: 3px; width: 189px; height: 9px; background: #dcdcdc; border-bottom: 1px solid #999; }
.infocenter input { width: 74px; height: 8px; background: #fff; border: 1px solid #777; border-width: 0 1px 1px; padding-left: 2px; font-style: italic; }
.infocenter input::placeholder { color: #555; opacity: 1; }
.play { transform: rotate(-90deg); }
.account { gap: 2px; margin-right: 2px; }
.winbtns { display: flex; gap: 13px; padding: 0 8px 0 16px; }
.winbtns svg { width: 6px; height: 6px; }
.tabs { display: flex; height: 8px; align-items: stretch; line-height: 8px; color: #222; white-space: nowrap; }
.tablist { display: flex; width: 416px; justify-content: space-between; padding: 0 5px 0 6px; }
.tabs .active { width: 38px; text-align: center; background: #d9eed1; border: 1px solid #7ad05a; border-bottom: 0; line-height: 7px; }
.pill { margin-left: 9px; gap: 1px; }
.pill i { width: 7px; height: 4px; border: 1px solid #666; border-radius: 2px; background: #eee; }

/* ribbon */
.ribbon { flex: none; height: 40px; display: flex; border: 1px solid #8fd36f; padding: 0 0 0 1px; background: linear-gradient(#cfe6c6, #8e8e8e); text-align: center; line-height: 6px; white-space: nowrap; }
.panel { display: flex; flex-direction: column; border-right: 1px solid #c4c4c4; background: #fafafa; }
.panel h2 { height: 7px; line-height: 7px; background: #ececec; display: flex; justify-content: center; align-items: center; gap: 2px; }
.panel.green h2 { background: #d3eac9; }
.tools { flex: 1; display: flex; justify-content: space-around; align-items: stretch; min-height: 0; }
.stack { flex-direction: column; align-items: center; }
.p-select { width: 23px; }
.p-props { width: 24px; }
.p-clip { width: 34px; }
.p-geo { width: 57px; }
.p-mod { width: 98px; }
.p-view { width: 28px; }
.p-meas { width: 23px; }
.p-create { width: 34px; border-right: 1px solid #555; }
.p-mode { width: 36px; }
.p-wall { width: 68px; }
.big { flex-direction: column; gap: 1px; color: #333; }
.big.off { color: #aaa; }
svg.large { width: 13px; height: 13px; }
.on { background: #a9cdf2; border: 1px solid #6fa3d8; }
.big.on { width: 19px; gap: 3px; }
.stack .on { width: 17px; height: 15px; }
.icons { display: grid; place-items: center; }
.icons svg { width: 8px; height: 8px; }
.one { grid-template-rows: repeat(3, 1fr); }
.two { grid-template-columns: 12px 12px; }
.three { grid-template-columns: repeat(3, 11px); }
.four { grid-template-columns: repeat(4, 16px); }
.four.pair { grid-template-columns: 16px 16px; }
.four svg { width: 13px; height: 13px; }
.dim { opacity: .4; }
.list { display: grid; }
.list button { gap: 2px; justify-content: flex-start; }
.list .tiny { width: 3px; height: 3px; }
.options { flex: none; height: 11px; line-height: 10px; padding-left: 4px; color: #a4ada1; background: #d8e4d2; border-bottom: 1px solid #8f938d; }

/* docked palettes */
.work { flex: 1; min-height: 0; display: flex; }
.side { width: 120px; flex: none; display: flex; flex-direction: column; border-right: 2px solid #aaa; }
.pal { height: 9px; flex: none; display: flex; align-items: center; justify-content: space-between; padding: 0 2px; background: #c3d3e6; }
.pal svg { width: 5px; height: 5px; }
.props { display: flex; flex-direction: column; height: 176px; flex: none; }
.type { height: 30px; justify-content: flex-start; text-align: left; gap: 2px; padding: 0 2px 0 1px; background: linear-gradient(#fafafa, #e9e9e9); border: 1px solid #ccc; }
.type .tiny { margin-left: auto; }
.thumb { width: 27px; height: 26px; background: #fff; border: 1px solid #ddd; display: flex; align-items: center; }
.thumb i { width: 100%; height: 7px; background: #ddd; border: 1px solid #777; border-width: 1px 0; }
.instance { height: 10px; display: flex; align-items: center; }
select { appearance: none; }
.instance select, .status select {
  background: linear-gradient(45deg, transparent 50%, #777 50% 70%, transparent 70%) right 3px center / 2px 2px no-repeat,
    linear-gradient(-45deg, transparent 50%, #777 50% 70%, transparent 70%) right 1px center / 2px 2px no-repeat, #e4e4e4;
}
.instance select { width: 83px; height: 9px; padding-left: 2px; }
.instance button { gap: 2px; margin-left: auto; padding-right: 3px; }
.gridwrap { flex: 1; min-height: 0; display: flex; background: #fff; }
.clip { flex: 1; overflow: hidden; }
table { width: 100%; height: 119px; table-layout: fixed; border-collapse: collapse; line-height: 5px; }
tr > * { padding: 0; text-align: left; font-weight: 400; border-bottom: 1px solid #e2e2e2; white-space: nowrap; }
tr th { width: 53px; padding-left: 4px; border-right: 1px solid #ddd; }
tr td:last-child { width: 5px; border-left: 1px solid #ddd; }
.group > * { background: #dedede; }
.group th { padding-left: 2px; font-weight: 500; width: 105px; }
.group svg { width: 4px; height: 4px; }
.ro { color: #999; }
table input { display: block; width: 100%; height: 6px; padding-left: 1px; }
table input.focus { border: 1px solid #333; padding-left: 0; }
input[type=checkbox] { appearance: none; width: 6px; height: 6px; padding: 0; margin-left: 1px; border: 1px solid #555; background: #fff; }
input[type=checkbox]:disabled { border-color: #ddd; }
.tick { display: grid; width: 7px; }
.tick > * { grid-area: 1 / 1; }
.tick svg { width: 6px; height: 6px; margin-left: 1px; pointer-events: none; }
.tick input { border-color: #888; }
.knob { background: #ccc; }
tr td.knob { border: 1px solid #999; }
.scroll, .vscroll { width: 8px; flex: none; display: flex; flex-direction: column; align-items: center; background: #f0f0f0; justify-content: space-between; padding: 1px 0; }
.scroll svg, .vscroll svg { width: 4px; height: 5px; }
.scroll i { width: 6px; background: #cdcdcd; margin-bottom: auto; }
.thumb-a { height: 46%; }
.thumb-b { height: 68%; }
.apply { height: 11px; flex: none; display: flex; justify-content: space-between; align-items: center; padding: 0 1px 2px 2px; }
.apply a { color: #1762b5; text-decoration: underline; }
.apply button { width: 31px; height: 9px; background: #ccc; color: #888; }
.browser { flex: 1; min-height: 0; display: flex; flex-direction: column; }
.tree { flex: 1; display: grid; grid-auto-rows: 1fr; padding-left: 2px; }
.tree li { display: flex; align-items: center; gap: 2px; white-space: nowrap; min-height: 0; line-height: 5px; }
.tree svg { width: 5px; height: 5px; }
.tree .l0 svg + svg { width: 7px; height: 7px; }
.tree .l1 { padding-left: 8px; gap: 4px; }
.tree .l2 { margin-left: 10px; padding-left: 8px; border-left: 1px dotted #aaa; gap: 1px; }
.l2::before { content: ""; width: 6px; border-top: 1px dotted #aaa; }
.tree b { background: #eee; font-weight: 700; }

/* drawing area */
.view { flex: 1; min-width: 0; display: grid; grid-template: minmax(0, 1fr) 8px / minmax(0, 1fr) 8px; }
.canvas { position: relative; min-height: 0; overflow: hidden; }
.scene { width: 100%; height: 100%; }
.k { fill: none; stroke: #111; }
.b1 { fill: none; stroke: #1045b5; stroke-width: 1.3; }
.b2 { fill: none; stroke: #345bb5; }
.dimtext { font: bold 5px Roboto, sans-serif; fill: #113f9e; }
.cubetext { font: bold 4px Roboto, sans-serif; fill: #666; }
.compass { font: bold 5px Roboto, sans-serif; fill: #b0b0b0; }
.childbtns { position: absolute; top: 3px; right: 1px; display: flex; gap: 2px; color: #fff; }
.childbtns svg { width: 5px; height: 5px; }
.navbar { position: absolute; right: 0; top: 83px; background: #8c8c8c; border: 1px solid #777; border-radius: 2px 0 0 2px; }
.navbar svg { width: 12px; height: 46px; }
.vscroll i { width: 6px; height: 7px; background: #cdcdcd; margin: auto 0 161px; }
.viewbar { grid-column: 1 / 3; display: flex; align-items: center; background: #f0f0f0; padding: 0 6px 0 11px; gap: 6px; }
.vicons { display: flex; width: 119px; justify-content: space-between; }
.hscroll { flex: 1; height: 6px; display: flex; }
.hscroll i { width: 7px; background: #cdcdcd; margin-left: 50%; }
.right { transform: rotate(90deg); }

/* status bar */
.status { flex: none; height: 11px; display: flex; align-items: center; gap: 4px; padding: 0 2px 0 1px; background: linear-gradient(#e6e6e6, #cfcfcf); border-top: 1px solid #bbb; }
.hint { width: 366px; color: #111; white-space: nowrap; }
.faint { opacity: .4; }
.status select { height: 8px; background-color: #fff; border: 1px solid #ddd; color: #888; padding-left: 2px; opacity: 1; }
.workset { width: 85px; }
.model { width: 86px; }
.sel { margin-left: auto; display: flex; gap: 4px; align-items: center; padding-right: 24px; }
.sel span { margin-left: -4px; }

/* desktop taskbar */
.taskbar { flex: none; height: 15px; display: flex; justify-content: space-between; background: linear-gradient(90deg, #090909 15%, #1f080e 60%, #14070b 72%, #0b0b0c); color: #e4e4e4; line-height: 6px; }
.apps { display: flex; }
.apps button { width: 20px; }
.apps svg { width: 9px; height: 9px; }
.apps .current { background: #3b3b3b; }
.apps b { width: 10px; height: 10px; background: #fff; font: bold 8px/10px "Liberation Sans", sans-serif; }
.acad { color: #b8232b; }
.revit { color: #1f5f9e; }
.tray { display: flex; align-items: center; gap: 3px; padding-right: 10px; text-align: center; }
.tray svg:first-child { margin-right: 4px; }
.tray .caret { width: 5px; }
.tray time { margin: 0 4px; }
```
